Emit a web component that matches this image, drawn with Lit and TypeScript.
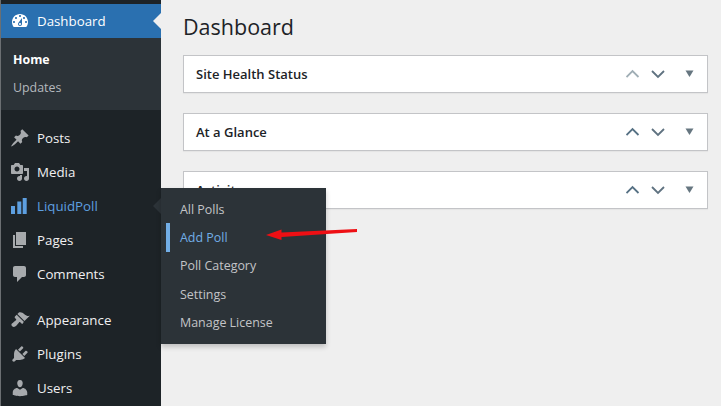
import { LitElement, html, css, svg } from "lit";
import { customElement } from "lit/decorators.js";

const ICONS: Record<string, string> = {
  dashboard: "M3.76 16h12.48c1.1-1.37 1.76-3.11 1.76-5 0-4.42-3.58-8-8-8s-8 3.58-8 8c0 1.89.66 3.63 1.76 5zM10 4c.55 0 1 .45 1 1s-.45 1-1 1-1-.45-1-1 .45-1 1-1zM6 6c.55 0 1 .45 1 1s-.45 1-1 1-1-.45-1-1 .45-1 1-1zm8 0c.55 0 1 .45 1 1s-.45 1-1 1-1-.45-1-1 .45-1 1-1zm-5.37 5.55L12 7v6c0 1.1-.9 2-2 2s-2-.9-2-2c0-.57.24-1.08.63-1.45zM4 10c.55 0 1 .45 1 1s-.45 1-1 1-1-.45-1-1 .45-1 1-1zm12 0c.55 0 1 .45 1 1s-.45 1-1 1-1-.45-1-1 .45-1 1-1zm-5 3c0-.55-.45-1-1-1s-1 .45-1 1 .45 1 1 1 1-.45 1-1z",
  posts: "M10.44 3.02l1.82-1.82 6.36 6.35-1.83 1.82c-1.05-.68-2.48-.57-3.41.36l-.75.75c-.92.93-1.04 2.35-.35 3.41l-1.83 1.82-2.41-2.41-2.8 2.79c-.42.42-3.38 2.71-3.8 2.29s1.86-3.39 2.28-3.81l2.79-2.79L4.1 9.36l1.83-1.82c1.05.69 2.48.57 3.4-.36l.75-.75c.93-.92 1.05-2.35.36-3.41z",
  media: "M13 11V4c0-.55-.45-1-1-1h-1.67L9 1H5L3.67 3H2c-.55 0-1 .45-1 1v7c0 .55.45 1 1 1h10c.55 0 1-.45 1-1zM7 4.5c1.38 0 2.5 1.12 2.5 2.5S8.38 9.5 7 9.5 4.5 8.38 4.5 7 5.62 4.5 7 4.5zM14 6h5v10.5c0 1.38-1.12 2.5-2.5 2.5S14 17.88 14 16.5s1.12-2.5 2.5-2.5c.17 0 .34.02.5.05V9h-3V6zm-4 8.05V13h2v3.5c0 1.38-1.12 2.5-2.5 2.5S7 17.88 7 16.5 8.12 14 9.5 14c.17 0 .34.02.5.05z",
  pages: "M6 15V2h10v13H6zm-1 1h8v2H3V5h2v11z",
  comments: "M5 2h9c1.1 0 2 .9 2 2v7c0 1.1-.9 2-2 2h-2l-5 5v-5H5c-1.1 0-2-.9-2-2V4c0-1.1.9-2 2-2z",
  appearance: "M14.48 11.06L7.41 3.99l1.5-1.5c.5-.56 2.3-.47 3.51.32 1.21.8 1.43 1.28 2.91 2.1 1.18.64 2.45 1.26 4.45.85zm-.71.71L6.7 4.7 4.93 6.47c-.39.39-.39 1.02 0 1.41l1.06 1.06c.39.39.39 1.03 0 1.42-.6.6-1.43 1.11-2.21 1.69-.35.26-.7.53-1.01.84C1.43 13.23.78 14.8 2.17 16.2c1.4 1.39 2.97.75 4.32-.6.31-.31.58-.66.84-1.01.58-.78 1.09-1.61 1.69-2.21.39-.39 1.03-.39 1.42 0l1.06 1.06c.39.39 1.02.39 1.41 0z",
  plugins: "M13.11 4.36L9.87 7.6 8 5.73l3.24-3.24c.35-.34 1.05-.2 1.56.32.52.51.66 1.21.31 1.55zm-8 1.77l.91-1.12 9.01 9.01-1.19.84c-.71.71-2.63 1.16-3.82 1.16H6.14L4.9 17.26c-.59.59-1.54.59-2.12 0-.59-.58-.59-1.53 0-2.12l1.24-1.24v-3.88c0-1.13.4-3.19 1.09-3.89zm7.26 3.97l3.24-3.24c.34-.35 1.04-.21 1.55.31.52.51.66 1.21.31 1.55l-3.24 3.25z",
  users: "M10 9.25c-2.27 0-2.73-3.44-2.73-3.44C7 4.02 7.82 2 9.97 2c2.16 0 2.98 2.02 2.71 3.81 0 0-.41 3.44-2.68 3.44zm0 2.57L12.72 10c2.39 0 4.52 2.33 4.52 4.53v2.49s-3.65 1.13-7.24 1.13c-3.65 0-7.24-1.13-7.24-1.13v-2.49c0-2.25 1.94-4.48 4.47-4.48z",
  poll: "M1 10h4v8H1zM7.3 5.5h4V18h-4zM12.7 2h4v16h-4z",
};

const icon = (name: string) => html`<svg class="ico" viewBox="0 0 20 20" width="20" height="20"><path fill-rule="evenodd" d=${ICONS[name]}></path></svg>`;

@customElement("app-root")
export class AppRoot extends LitElement {
  static styles = css`
    :host { display: block; width: 721px; height: 406px; overflow: hidden; background: #efefef; font-family: "Open Sans", "Noto Sans", sans-serif; font-size: 13.3px; position: relative; }
    .page { display: flex; height: 406px; }
    .side { width: 160px; flex: none; margin-left: 1px; background: #1d2327; padding-top: 4px; box-sizing: border-box; position: relative; }
    .side::before { content: ""; position: absolute; left: -1px; top: 0; bottom: 0; width: 1px; background: #6b6f72; }
    .item { display: flex; align-items: center; height: 34px; color: #f0f0f1; position: relative; }
    .item .ico { margin-left: 9px; margin-right: 7px; fill: #a7aaad; flex: none; }
    .item.current { background: #2a70b0; color: #fff; }
    .item.current .ico { fill: #fff; }
    .item.current::after { content: ""; position: absolute; right: 0; top: 9px; border: 8px solid transparent; border-right-color: #efefef; border-left: 0; }
    .item.poll { color: #5d9fe0; }
    .item.poll .ico { fill: #5d9fe0; }
    .item.poll::after { content: ""; position: absolute; right: 0; top: 9px; border: 8px solid transparent; border-right-color: #2c3338; border-left: 0; }
    .sub { background: #2c3338; padding: 7px 0 8px 12px; height: 72px; box-sizing: border-box; margin-bottom: 11px; color: #b4b9be; font-size: 12.4px; }
    .sub div { height: 28px; display: flex; align-items: center; }
    .sub .on { color: #fff; font-weight: 700; }
    .sep { height: 12px; }
    .main { flex: 1; padding: 0 13px 0 22px; min-width: 0; }
    h1 { margin: 0; height: 55px; padding-bottom: 2px; display: flex; align-items: center; font-weight: 400; font-size: 21.5px; color: #1d2327; box-sizing: border-box; }
    .card { height: 38px; box-sizing: border-box; background: #fff; border: 1px solid #c3c4c7; margin-bottom: 20px; display: flex; align-items: center; padding-left: 12px; padding-right: 3px; color: #1d2327; font-weight: 600; font-size: 13px; box-shadow: 0 1px 1px rgba(0,0,0,.04); }
    .card span { flex: 1; }
    .ctrl { display: block; flex: none; }
    .fly { position: absolute; left: 161px; top: 188px; width: 165px; height: 156px; background: #2c3338; box-shadow: 0 3px 5px rgba(0,0,0,.2); padding: 7px 0 0 5px; box-sizing: border-box; color: #c3c4c7; font-size: 12.45px; }
    .fly div { height: 28.4px; display: flex; align-items: center; padding-left: 14px; position: relative; }
    .fly .act { color: #72aee6; }
    .fly .act::before { content: ""; position: absolute; left: 0; top: 0; bottom: 0; width: 4px; background: #72aee6; }
    .arrow { position: absolute; left: 260px; top: 222px; }
  `;

  card(title: string, dim = false) {
    const up = dim ? "#a0aeb5" : "#567184";
    return html`<div class="card"><span>${title}</span>
      <svg class="ctrl" width="78" height="20" viewBox="0 0 78 20" fill="none">
        ${svg`<path d="M0.5 13 L6.5 7 L12.5 13" stroke=${up} stroke-width="1.8"></path>
        <path d="M26 7 L32 13 L38 7" stroke="#5f7280" stroke-width="1.8"></path>
        <path d="M59.5 6.5 H67.5 L63.5 13 Z" fill="#667680"></path>`}
      </svg></div>`;
  }

  render() {
    return html`<div class="page">
      <nav class="side">
        <div class="item current">${icon("dashboard")}Dashboard</div>
        <div class="sub"><div class="on">Home</div><div>Updates</div></div>
        <div class="item">${icon("posts")}Posts</div>
        <div class="item">${icon("media")}Media</div>
        <div class="item poll">${icon("poll")}LiquidPoll</div>
        <div class="item">${icon("pages")}Pages</div>
        <div class="item">${icon("comments")}Comments</div>
        <div class="sep"></div>
        <div class="item">${icon("appearance")}Appearance</div>
        <div class="item">${icon("plugins")}Plugins</div>
        <div class="item">${icon("users")}Users</div>
      </nav>
      <main class="main">
        <h1>Dashboard</h1>
        ${this.card("Site Health Status", true)}
        ${this.card("At a Glance")}
        ${this.card("Activity")}
      </main>
    </div>
    <div class="fly">
      <div>All Polls</div>
      <div class="act">Add Poll</div>
      <div>Poll Category</div>
      <div>Settings</div>
      <div>Manage License</div>
    </div>
    <svg class="arrow" width="100" height="22" viewBox="0 0 100 22">
      <path d="M6 13 L21.5 7.5 L21.5 10.5 L97 7 L97 10 L21.5 15 L21.5 18 Z" fill="#ee0f14"></path>
    </svg>`;
  }
}
